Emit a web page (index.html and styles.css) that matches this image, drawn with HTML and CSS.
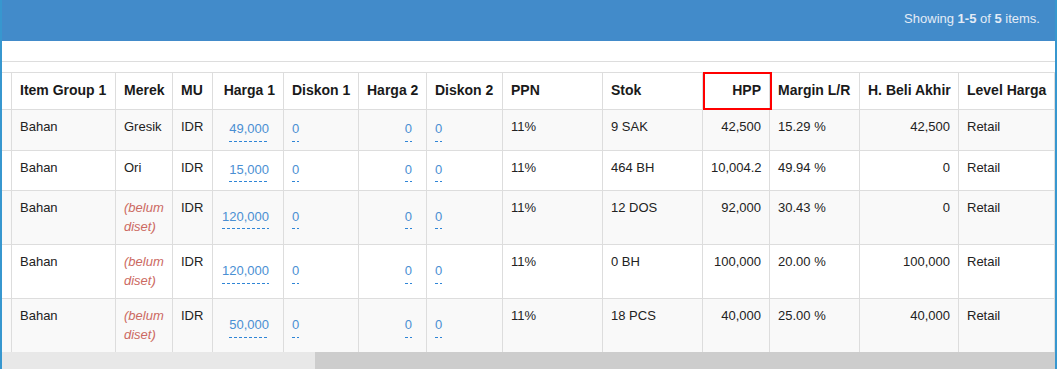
FILE: index.html
```html
<!DOCTYPE html>
<html lang="id">
<head>
<meta charset="utf-8">
<title>Daftar Harga Item</title>
<link rel="stylesheet" href="styles.css">
</head>
<body>
<div class="panel">
  <div class="panel-heading">
    <div class="summary">Showing <b>1-5</b> of <b>5</b> items.</div>
  </div>
  <div class="toolbar"></div>
  <div class="table-wrap">
    <table class="grid">
      <thead>
        <tr>
          <th class="cut w-cut"></th>
          <th class="w-group">Item Group 1</th>
          <th class="w-merek">Merek</th>
          <th class="w-mu">MU</th>
          <th class="w-h1 num">Harga 1</th>
          <th class="w-d1">Diskon 1</th>
          <th class="w-h2 num">Harga 2</th>
          <th class="w-d2">Diskon 2</th>
          <th class="w-ppn">PPN</th>
          <th class="w-stok">Stok</th>
          <th class="w-hpp num hpp">HPP</th>
          <th class="w-margin">Margin L/R</th>
          <th class="w-beli num">H. Beli Akhir</th>
          <th class="w-level">Level Harga</th>
        </tr>
      </thead>
      <tbody>
        <tr>
          <td class="cut"></td>
          <td>Bahan</td>
          <td>Gresik</td>
          <td>IDR</td>
          <td class="num mid"><a class="edit" href="#">49,000</a></td>
          <td class="mid"><a class="edit" href="#">0</a></td>
          <td class="num mid"><a class="edit" href="#">0</a></td>
          <td class="mid"><a class="edit" href="#">0</a></td>
          <td>11%</td>
          <td>9 SAK</td>
          <td class="num">42,500</td>
          <td>15.29 %</td>
          <td class="num">42,500</td>
          <td>Retail</td>
        </tr>
        <tr>
          <td class="cut"></td>
          <td>Bahan</td>
          <td>Ori</td>
          <td>IDR</td>
          <td class="num mid"><a class="edit" href="#">15,000</a></td>
          <td class="mid"><a class="edit" href="#">0</a></td>
          <td class="num mid"><a class="edit" href="#">0</a></td>
          <td class="mid"><a class="edit" href="#">0</a></td>
          <td>11%</td>
          <td>464 BH</td>
          <td class="num">10,004.2</td>
          <td>49.94 %</td>
          <td class="num">0</td>
          <td>Retail</td>
        </tr>
        <tr>
          <td class="cut"></td>
          <td>Bahan</td>
          <td><span class="empty">(belum diset)</span></td>
          <td>IDR</td>
          <td class="num mid"><a class="edit" href="#">120,000</a></td>
          <td class="mid"><a class="edit" href="#">0</a></td>
          <td class="num mid"><a class="edit" href="#">0</a></td>
          <td class="mid"><a class="edit" href="#">0</a></td>
          <td>11%</td>
          <td>12 DOS</td>
          <td class="num">92,000</td>
          <td>30.43 %</td>
          <td class="num">0</td>
          <td>Retail</td>
        </tr>
        <tr>
          <td class="cut"></td>
          <td>Bahan</td>
          <td><span class="empty">(belum diset)</span></td>
          <td>IDR</td>
          <td class="num mid"><a class="edit" href="#">120,000</a></td>
          <td class="mid"><a class="edit" href="#">0</a></td>
          <td class="num mid"><a class="edit" href="#">0</a></td>
          <td class="mid"><a class="edit" href="#">0</a></td>
          <td>11%</td>
          <td>0 BH</td>
          <td class="num">100,000</td>
          <td>20.00 %</td>
          <td class="num">100,000</td>
          <td>Retail</td>
        </tr>
        <tr>
          <td class="cut"></td>
          <td>Bahan</td>
          <td><span class="empty">(belum diset)</span></td>
          <td>IDR</td>
          <td class="num mid"><a class="edit" href="#">50,000</a></td>
          <td class="mid"><a class="edit" href="#">0</a></td>
          <td class="num mid"><a class="edit" href="#">0</a></td>
          <td class="mid"><a class="edit" href="#">0</a></td>
          <td>11%</td>
          <td>18 PCS</td>
          <td class="num">40,000</td>
          <td>25.00 %</td>
          <td class="num">40,000</td>
          <td>Retail</td>
        </tr>
      </tbody>
    </table>
  </div>
  <div class="hscroll"><div class="hscroll-thumb"></div></div>
</div>
</body>
</html>
```

FILE: styles.css
```css
*, *::before, *::after { box-sizing: border-box; }

html, body {
  margin: 0;
  padding: 0;
  background: #ffffff;
}

body {
  font-family: "Liberation Sans", Arial, sans-serif;
  font-size: 13px;
  line-height: 1.42857;
  color: #333333;
}

.panel {
  width: 1057px;
  border-left: 2px solid #3797cf;
  border-right: 2px solid #3797cf;
  background: #ffffff;
}

.panel-heading {
  height: 41px;
  padding: 10px 15px 0 15px;
  background: #428bca;
  color: #e4ecf6;
  text-align: right;
}

.summary b {
  font-weight: bold;
}

.toolbar {
  height: 21px;
  border-bottom: 1px solid #dddddd;
}

.table-wrap {
  padding-top: 10px;
  overflow: hidden;
}

.grid {
  width: 1053px;
  table-layout: fixed;
  border-collapse: separate;
  border-spacing: 0;
  border-top: 1px solid #dddddd;
}

.grid th,
.grid td {
  padding: 8px;
  border-right: 1px solid #dddddd;
  border-bottom: 1px solid #dddddd;
  vertical-align: top;
  text-align: left;
}

.grid th {
  font-size: 14px;
  font-weight: bold;
  color: #1a1a1a;
  white-space: nowrap;
  background: #ffffff;
}

.grid td {
  color: #222222;
}

.grid tbody tr:nth-child(odd) td {
  background: #f9f9f9;
}

.grid tbody tr:last-child td {
  border-bottom: 0;
}

.grid .cut {
  padding: 0;
}

.grid .num {
  text-align: right;
}

.grid .mid {
  vertical-align: middle;
}

.w-cut { width: 10px; }
.w-group { width: 104px; }
.w-merek { width: 57px; }
.w-mu { width: 40px; }
.w-h1 { width: 71px; }
.w-d1 { width: 75px; }
.w-h2 { width: 68px; }
.w-d2 { width: 76px; }
.w-ppn { width: 100px; }
.w-stok { width: 100px; }
.w-hpp { width: 67px; }
.w-margin { width: 90px; }
.w-beli { width: 99px; }
.w-level { width: 96px; }

.edit {
  display: inline-block;
  padding: 2px 0 3px 0;
  color: #4a8fd3;
  text-decoration: none;
  background-image: repeating-linear-gradient(to right, #2f85d6 0, #2f85d6 3px, transparent 3px, transparent 5px);
  background-size: 100% 1px;
  background-position: left bottom;
  background-repeat: no-repeat;
}

.num .edit {
  margin-right: 6px;
}

.empty {
  color: #cc6a62;
  font-style: italic;
}

.hpp {
  position: relative;
}

.hpp::after {
  content: "";
  position: absolute;
  left: 0;
  top: -1px;
  width: 69px;
  height: 38px;
  border: 2px solid #ff0000;
}

.hscroll {
  height: 17px;
  padding-left: 313px;
  background: #e8e8e8;
}

.hscroll-thumb {
  height: 100%;
  background: #cdcdcd;
}
```
